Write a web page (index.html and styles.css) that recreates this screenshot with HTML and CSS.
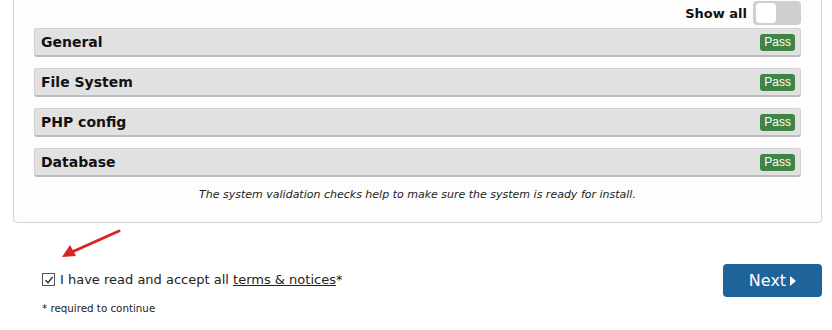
FILE: index.html
```html
<!DOCTYPE html>
<html lang="en">
<head>
    <meta charset="UTF-8">
    <title>Install - System check</title>
    <link rel="stylesheet" href="styles.css">
</head>
<body>
    <div class="page">
        <div class="panel">
            <div class="show-all">
                <span>Show all</span>
                <label class="toggle"><span class="knob"></span></label>
            </div>

            <div class="check-row"><span class="check-name">General</span><span class="badge">Pass</span></div>
            <div class="check-row"><span class="check-name">File System</span><span class="badge">Pass</span></div>
            <div class="check-row"><span class="check-name">PHP config</span><span class="badge">Pass</span></div>
            <div class="check-row"><span class="check-name">Database</span><span class="badge">Pass</span></div>

            <p class="hint">The system validation checks help to make sure the system is ready for install.</p>
        </div>

        <div class="footer">
            <div class="accept">
                <svg class="arrow" width="62" height="30" viewBox="0 0 62 30">
                    <line x1="59" y1="2" x2="12" y2="23" stroke="#d22" stroke-width="3" stroke-linecap="round"/>
                    <polygon points="2,28 10,16 16,27" fill="#d22"/>
                </svg>
                <label class="agree">
                    <span class="box">
                        <svg width="10" height="10" viewBox="0 0 10 10"><path d="M1.5 5.2 L4 7.6 L8.6 2" fill="none" stroke="#333" stroke-width="1.4"/></svg>
                    </span>
                    <span>I have read and accept all <a href="#">terms &amp; notices</a>*</span>
                </label>
                <p class="required">* required to continue</p>
            </div>
            <button class="next">Next <span class="caret"></span></button>
        </div>
    </div>
</body>
</html>
```

FILE: styles.css
```css
* {
    box-sizing: border-box;
    margin: 0;
    padding: 0;
}

body {
    background-color: #fff;
    color: #111;
    font-family: 'DejaVu Sans', Verdana, sans-serif;
    overflow: hidden;
}

.page {
    padding: 0 10px 0 13px;
}

.panel {
    margin-top: -12px;
    padding: 12px 20px 0 20px;
    height: 235px;
    border: 1px solid #d4d4d4;
    border-radius: 4px;
    background-color: #fdfdfd;
}

.show-all {
    display: flex;
    justify-content: flex-end;
    align-items: center;
    gap: 6px;
    height: 24px;
    margin-bottom: 3px;
    font-size: 13px;
    font-weight: bold;
}

.toggle {
    width: 48px;
    height: 24px;
    border-radius: 4px;
    background-color: #cfcfcf;
    padding: 2px 3px;
}

.knob {
    display: block;
    width: 20px;
    height: 20px;
    border-radius: 4px;
    background-color: #fff;
}

.check-row {
    display: flex;
    justify-content: space-between;
    align-items: center;
    height: 29px;
    margin-bottom: 11px;
    padding: 0 5px 0 6px;
    background-color: #e1e1e1;
    border: 1px solid #d2d2d2;
    border-bottom: 2px solid #bcbcbc;
    border-radius: 3px;
}

.check-name {
    font-size: 14px;
    font-weight: bold;
}

.badge {
    background-color: #3f8446;
    color: #fff;
    font-family: 'Liberation Sans', Arial, sans-serif;
    font-size: 12px;
    line-height: 17px;
    padding: 0 4px;
    border-radius: 3px;
}

.hint {
    margin-top: 8px;
    text-align: center;
    font-size: 11px;
    font-style: italic;
    color: #222;
}

.footer {
    display: flex;
    justify-content: space-between;
    align-items: flex-start;
    padding-top: 6px;
}

.accept {
    padding-left: 29px;
}

.arrow {
    display: block;
    margin-left: 18px;
}

.agree {
    display: flex;
    align-items: center;
    gap: 5px;
    margin-top: 13px;
    font-size: 13px;
    color: #222;
}

.agree a {
    color: #222;
}

.box {
    display: inline-flex;
    align-items: center;
    justify-content: center;
    width: 13px;
    height: 13px;
    border: 1px solid #555;
    background-color: #fff;
}

.required {
    margin-top: 15px;
    font-size: 10.3px;
    color: #222;
}

.next {
    margin-top: 35px;
    width: 99px;
    height: 33px;
    border: none;
    border-radius: 4px;
    background-color: #1e6399;
    color: #fff;
    font-family: 'DejaVu Sans', Verdana, sans-serif;
    font-size: 16px;
    display: flex;
    align-items: center;
    justify-content: center;
    gap: 4px;
}

.caret {
    width: 0;
    height: 0;
    border-top: 5px solid transparent;
    border-bottom: 5px solid transparent;
    border-left: 6px solid #fff;
}
```
